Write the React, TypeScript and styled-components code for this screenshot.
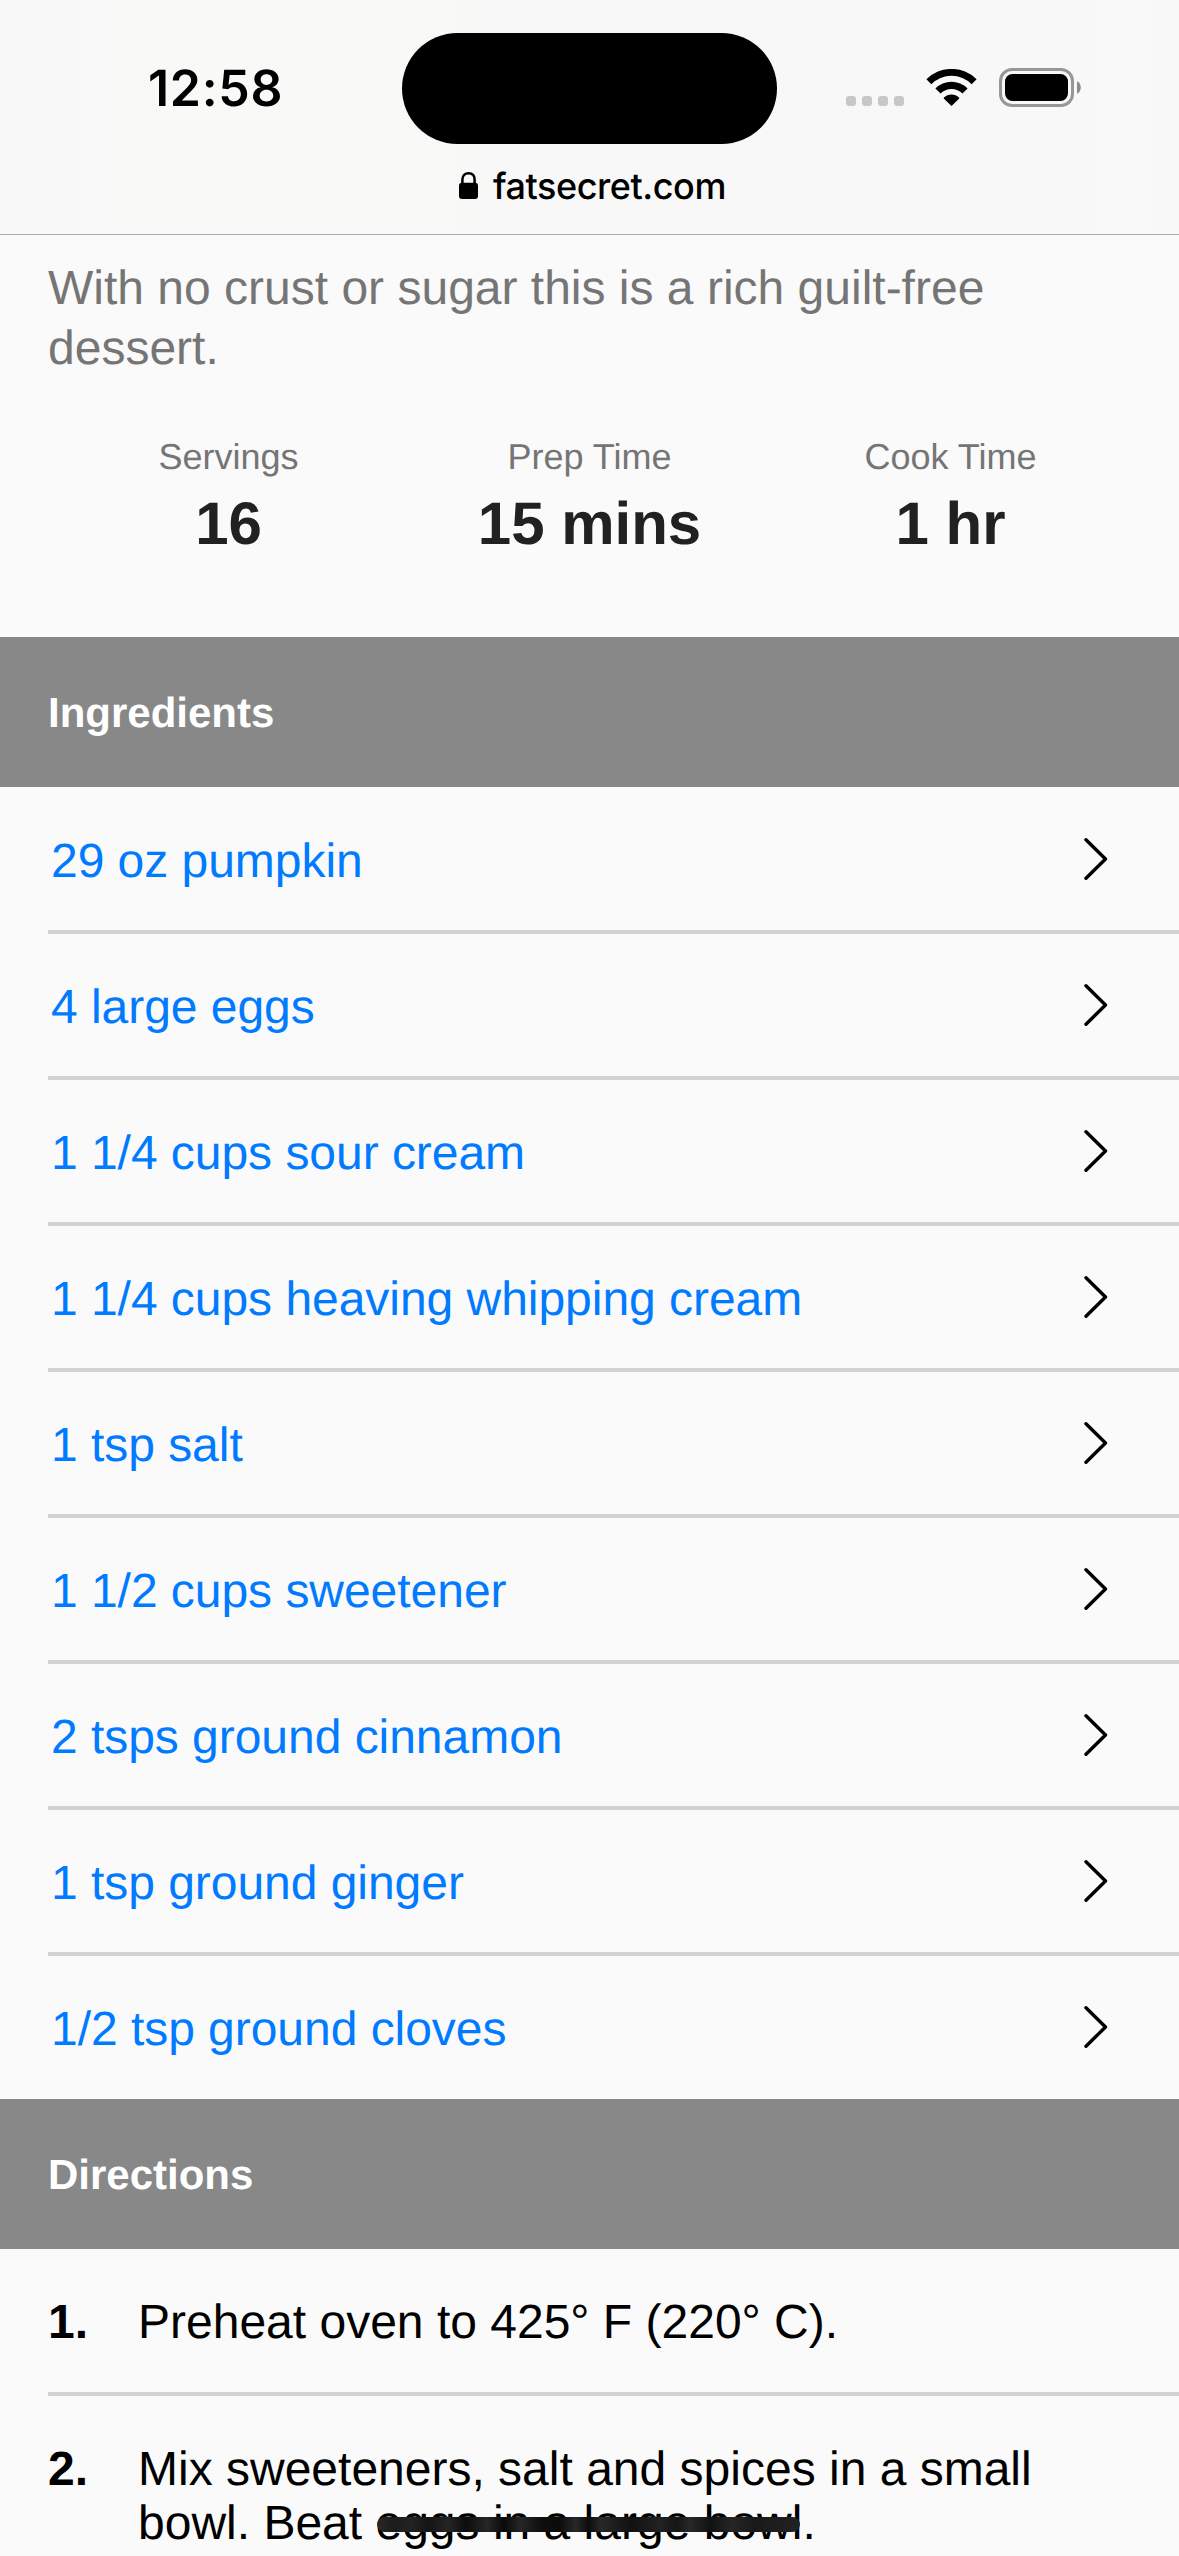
import React from "react";
import styled, { createGlobalStyle } from "styled-components";

const GlobalStyle = createGlobalStyle`
  * { box-sizing: border-box; }
  html, body { margin: 0; padding: 0; background: #fafafa; }
  body {
    font-family: "Liberation Sans", Arial, Helvetica, sans-serif;
    text-rendering: geometricPrecision;
    -webkit-font-smoothing: antialiased;
  }
`;

const Screen = styled.div`
  width: 1179px;
  height: 2556px;
  overflow: hidden;
  background: #fafafa;
  display: flex;
  flex-direction: column;
`;

const BrowserHeader = styled.header`
  flex: none;
  height: 235px;
  padding-top: 33px;
  border-bottom: 1px solid #acacac;
  background: linear-gradient(90deg, #f8f8f9 0%, #f9f9f7 17%, #f9f9f7 30%, #f8f8f8 45%, #f8f8f8 91%, #f9f9f9 95%, #f8f8f8 100%);
  font-family: Inter, "Liberation Sans", sans-serif;
  color: #000;
`;

const StatusBar = styled.div`
  display: grid;
  grid-template-columns: 402px 375px 402px;
  grid-template-rows: 111px;
  height: 111px;
`;

const Clock = styled.time`
  padding-left: 148px;
  line-height: 112px;
  font-size: 50px;
  font-weight: 600;
  letter-spacing: 0.7px;
`;

const Island = styled.div`
  background: #000;
  border-radius: 56px;
`;

const StatusIcons = styled.div`
  display: flex;
  align-items: flex-start;
  justify-content: flex-end;
  padding: 35px 98px 0 0;
`;

const SignalDots = styled.div`
  display: flex;
  gap: 6px;
  padding-top: 28px;
  margin-right: 22px;
`;

const SignalDot = styled.span`
  width: 10px;
  height: 10px;
  border-radius: 3px;
  background: #c7c7c7;
`;

const WifiSvg = styled.svg`
  display: block;
  margin: 1px 22px 0 0;
`;

const BatterySvg = styled.svg`
  display: block;
`;

const AddressBar = styled.div`
  display: flex;
  align-items: flex-start;
  padding-left: 459px;
`;

const LockSvg = styled.svg`
  margin: 28px 15px 0 0;
`;

const Domain = styled.span`
  padding-top: 20px;
  font-size: 36px;
  line-height: 44px;
  font-weight: 500;
  letter-spacing: -0.45px;
`;

const Description = styled.p`
  margin: 0;
  padding: 24px 48px 0;
  color: #757575;
  font-size: 48px;
  line-height: 60px;
`;

const Stats = styled.dl`
  margin: 0;
  padding: 57px 48px 77px;
  display: grid;
  grid-template-columns: repeat(3, 1fr);
  text-align: center;
`;

const StatLabel = styled.dt`
  color: #757575;
  font-size: 36px;
  line-height: 42px;
`;

const StatValue = styled.dd`
  margin: 10px 0 0;
  color: #212121;
  font-size: 60px;
  line-height: 72px;
  font-weight: 700;
`;

const SectionTitle = styled.h2`
  flex: none;
  margin: 0;
  height: 150px;
  padding-left: 48px;
  background: #888;
  color: #fff;
  font-size: 42px;
  line-height: 152px;
  font-weight: 700;
`;

const List = styled.ul`
  list-style: none;
  margin: 0;
  padding: 1px 0 0 48px;
`;

const IngredientRow = styled.li`
  display: flex;
  align-items: flex-start;
  justify-content: space-between;
  height: 146px;
  padding: 0 70px 0 3px;
  border-bottom: 4px solid #d2d2d2;

  &:last-child {
    height: 143px;
    border-bottom: none;
  }
`;

const IngredientLink = styled.a`
  color: #007aff;
  font-size: 48px;
  line-height: 147px;
  letter-spacing: -0.04px;
  text-decoration: none;
`;

const ChevronSvg = styled.svg`
  margin-top: 49px;
`;

const Steps = styled.ol`
  list-style: none;
  margin: 0;
  padding: 0 0 0 48px;
`;

const Step = styled.li`
  display: grid;
  grid-template-columns: 90px 1fr;
  padding: 47px 100px 42px 0;
  border-bottom: 4px solid #d2d2d2;
  color: #000;
  font-size: 48px;
  line-height: 54px;
`;

const StepNumber = styled.span`
  font-weight: 700;
`;

const Scribbled = styled.span`
  position: relative;
  white-space: nowrap;

  &::after {
    content: "";
    position: absolute;
    left: 2px;
    right: 2px;
    top: 20px;
    height: 15px;
    border-radius: 8px;
    background: linear-gradient(90deg, #282828 0%, #1c1c1c 4%, #222 8%, #151515 12%, #242424 17%, #0c0c0c 21%, #262626 26%, #0a0a0a 30%, #262626 34%, #0e0e0e 39%, #0b0b0b 43%, #282828 47%, #0c0c0c 50%, #282828 53%, #111 60%, #222 67%, #151515 71%, #282828 74%, #111 79%, #262626 84%, #191919 89%, #222 100%);
  }
`;

const ingredients = [
  "29 oz pumpkin",
  "4 large eggs",
  "1 1/4 cups sour cream",
  "1 1/4 cups heaving whipping cream",
  "1 tsp salt",
  "1 1/2 cups sweetener",
  "2 tsps ground cinnamon",
  "1 tsp ground ginger",
  "1/2 tsp ground cloves",
];

const stats = [
  { label: "Servings", value: "16" },
  { label: "Prep Time", value: "15 mins" },
  { label: "Cook Time", value: "1 hr" },
];

const Wifi = () => (
  <WifiSvg width="51" height="37" viewBox="0 0 51 37">
    <path d="M.4 10.3A35.5 35.5 0 0 1 50.6 10.3L45.7 15.3A28.4 28.4 0 0 0 5.3 15.3Z" />
    <path d="M9.4 19.4A22.8 22.8 0 0 1 41.6 19.4L36.4 24.6A15.4 15.4 0 0 0 14.6 24.6Z" />
    <path d="M18 28.6A10.6 10.6 0 0 1 33 28.6Q33.6 29.2 33 29.8L25.5 37L18 29.8Q17.4 29.2 18 28.6Z" />
  </WifiSvg>
);

const Battery = () => (
  <BatterySvg width="82" height="39" viewBox="0 0 82 39">
    <rect x="1.5" y="1.5" width="72" height="36" rx="11.5" fill="none" stroke="#979797" strokeWidth="3" />
    <rect x="6" y="6" width="63" height="27" rx="7.5" />
    <path d="M78 13.2C83 15.5 83 23.5 78 25.8Z" fill="#8c8c8c" />
  </BatterySvg>
);

const Lock = () => (
  <LockSvg width="19" height="27" viewBox="0 0 19 27">
    <path d="M3.4 13V7.6C3.4 3.4 6 1.3 9.5 1.3S15.6 3.4 15.6 7.6V13" fill="none" stroke="#000" strokeWidth="2.5" />
    <rect x="0" y="10.8" width="19" height="16.2" rx="3" />
  </LockSvg>
);

const Chevron = () => (
  <ChevronSvg width="25" height="44" viewBox="0 0 25 44" fill="none">
    <path d="M2 2.7L21.5 22L2 41.3" stroke="#000" strokeWidth="3.4" strokeLinecap="round" strokeLinejoin="round" />
  </ChevronSvg>
);

export default function App() {
  return (
    <>
      <GlobalStyle />
      <Screen>
        <BrowserHeader>
          <StatusBar>
            <Clock>12:58</Clock>
            <Island />
            <StatusIcons>
              <SignalDots>
                <SignalDot />
                <SignalDot />
                <SignalDot />
                <SignalDot />
              </SignalDots>
              <Wifi />
              <Battery />
            </StatusIcons>
          </StatusBar>
          <AddressBar>
            <Lock />
            <Domain>fatsecret.com</Domain>
          </AddressBar>
        </BrowserHeader>
        <Description>With no crust or sugar this is a rich guilt-free dessert.</Description>
        <Stats>
          {stats.map((s) => (
            <div key={s.label}>
              <StatLabel>{s.label}</StatLabel>
              <StatValue>{s.value}</StatValue>
            </div>
          ))}
        </Stats>
        <SectionTitle>Ingredients</SectionTitle>
        <List>
          {ingredients.map((name) => (
            <IngredientRow key={name}>
              <IngredientLink>{name}</IngredientLink>
              <Chevron />
            </IngredientRow>
          ))}
        </List>
        <SectionTitle>Directions</SectionTitle>
        <Steps>
          <Step>
            <StepNumber>1.</StepNumber>
            <span>Preheat oven to 425° F (220° C).</span>
          </Step>
          <Step>
            <StepNumber>2.</StepNumber>
            <span>
              Mix sweeteners, salt and spices in a small bowl. Beat <Scribbled>eggs in a large bowl</Scribbled>.
            </span>
          </Step>
        </Steps>
      </Screen>
    </>
  );
}
